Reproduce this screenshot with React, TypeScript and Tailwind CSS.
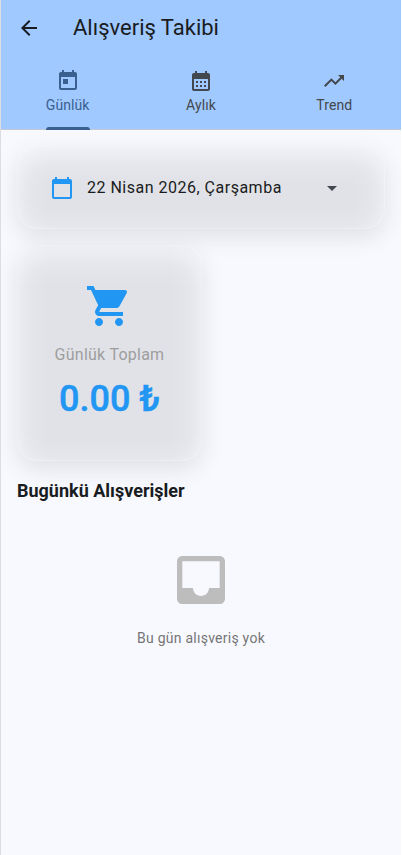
import React from 'react';

const paths = {
  back: 'M20 11H7.83l5.59-5.59L12 4l-8 8 8 8 1.41-1.41L7.83 13H20v-2z',
  today:
    'M19 3h-1V1h-2v2H8V1H6v2H5c-1.11 0-1.99.9-1.99 2L3 19c0 1.1.89 2 2 2h14c1.1 0 2-.9 2-2V5c0-1.1-.9-2-2-2zm0 16H5V8h14v11zM7 10h5v5H7z',
  month:
    'M19 4h-1V2h-2v2H8V2H6v2H5c-1.11 0-1.99.9-1.99 2L3 20c0 1.1.89 2 2 2h14c1.1 0 2-.9 2-2V6c0-1.1-.9-2-2-2zm0 16H5V10h14v10zM9 14H7v-2h2v2zm4 0h-2v-2h2v2zm4 0h-2v-2h2v2zm-8 4H7v-2h2v2zm4 0h-2v-2h2v2zm4 0h-2v-2h2v2z',
  trend: 'M16 6l2.29 2.29-4.88 4.88-4-4L2 16.59 3.41 18l6-6 4 4 6.3-6.29L22 12V6z',
  calendar:
    'M20 3h-1V1h-2v2H7V1H5v2H4c-1.1 0-2 .9-2 2v16c0 1.1.9 2 2 2h16c1.1 0 2-.9 2-2V5c0-1.1-.9-2-2-2zm0 18H4V8h16v13z',
  dropDown: 'M7 10l5 5 5-5z',
  cart: 'M7 18c-1.1 0-1.99.9-1.99 2S5.9 22 7 22s2-.9 2-2-.9-2-2-2zM1 2v2h2l3.6 7.59-1.35 2.45c-.16.28-.25.61-.25.96 0 1.1.9 2 2 2h12v-2H7.42c-.14 0-.25-.11-.25-.25l.03-.12.9-1.63h7.45c.75 0 1.41-.41 1.75-1.03l3.58-6.49c.08-.14.12-.31.12-.48 0-.55-.45-1-1-1H5.21l-.94-2H1zm16 16c-1.1 0-1.99.9-1.99 2s.89 2 1.99 2 2-.9 2-2-.9-2-2-2z',
  inbox:
    'M19 3H4.99c-1.11 0-1.98.89-1.98 2L3 19c0 1.1.88 2 1.99 2H19c1.1 0 2-.9 2-2V5c0-1.11-.9-2-2-2zm0 12h-4c0 1.66-1.35 3-3 3s-3-1.34-3-3H4.99V5H19v10z',
};

const Icon = ({ name, className }: { name: keyof typeof paths; className: string }) => (
  <svg viewBox="0 0 24 24" fill="currentColor" className={`shrink-0 ${className}`}>
    <path d={paths[name]} />
  </svg>
);

// The box shadow only paints outside the card; the inner layer continues it,
// softer, behind the frosted surface.
const GlassCard = ({ className, children }: { className: string; children: React.ReactNode }) => (
  <div
    className={`relative overflow-hidden rounded-[20px] shadow-[0_8px_24px_rgba(0,0,0,0.1)] ${className}`}
  >
    <div className="absolute inset-0 translate-y-2 rounded-[20px] bg-black/10 blur-[15px]" />
    <div className="relative h-full rounded-[20px] border border-white/20 bg-white/10">{children}</div>
  </div>
);

const tabs: { label: string; icon: keyof typeof paths }[] = [
  { label: 'Günlük', icon: 'today' },
  { label: 'Aylık', icon: 'month' },
  { label: 'Trend', icon: 'trend' },
];

const App = () => {
  return (
    <div className="h-[855px] w-[402px] overflow-hidden border-r border-l border-r-white border-l-[#dcdde2] bg-[#f8f9ff] font-['Roboto',sans-serif] text-[#191c20]">
      <header className="h-[130px] border-b border-[#c3c8d4] bg-[#a0c9ff]">
        <div className="flex h-14 items-center pl-4">
          <Icon name="back" className="size-6" />
          <h1 className="ml-8 text-[22px] leading-7">Alışveriş Takibi</h1>
        </div>
        <nav className="grid h-[74px] grid-cols-3">
          {tabs.map((tab, i) => (
            <div
              key={tab.label}
              className={`flex flex-col items-center pt-[13px] ${i === 0 ? 'text-[#3a608f]' : 'text-[#43474e]'}`}
            >
              <Icon name={tab.icon} className="size-6" />
              <span className="mt-0.5 text-sm leading-5 tracking-[0.1px]">{tab.label}</span>
              {i === 0 && <div className="mt-auto h-[3px] w-11 rounded-t-[3px] bg-[#3a608f]" />}
            </div>
          ))}
        </nav>
      </header>

      <main className="px-4 pt-4">
        <GlassCard className="h-[83px]">
          <div className="flex h-full items-center pr-10 pl-8">
            <Icon name="calendar" className="size-6 text-[#2196f3]" />
            <span className="ml-[13px] text-base tracking-[0.5px]">22 Nisan 2026, Çarşamba</span>
            <Icon name="dropDown" className="ml-auto size-6 text-[#43474e]" />
          </div>
        </GlassCard>

        <GlassCard className="mt-4 h-[216px] w-[185px]">
          <div className="flex flex-col items-center pt-9">
            <Icon name="cart" className="mr-px size-12 text-[#2196f3]" />
            <p className="mt-[13px] text-base leading-6 tracking-[0.25px] text-[#9e9e9e]">Günlük Toplam</p>
            <p className="mt-2 text-[36px] leading-[48px] font-medium text-[#2196f3] [-webkit-text-stroke:0.5px_#2196f3]">
              0.00 ₺
            </p>
          </div>
        </GlassCard>

        <h2 className="mt-4 text-lg leading-7 font-bold">Bugünkü Alışverişler</h2>

        <div className="mt-[43px] flex flex-col items-center">
          <Icon name="inbox" className="size-16 text-[#bdbdbd]" />
          <p className="mt-4 text-sm leading-5 tracking-[0.25px] text-[#757575]">Bu gün alışveriş yok</p>
        </div>
      </main>
    </div>
  );
};

export default App;
